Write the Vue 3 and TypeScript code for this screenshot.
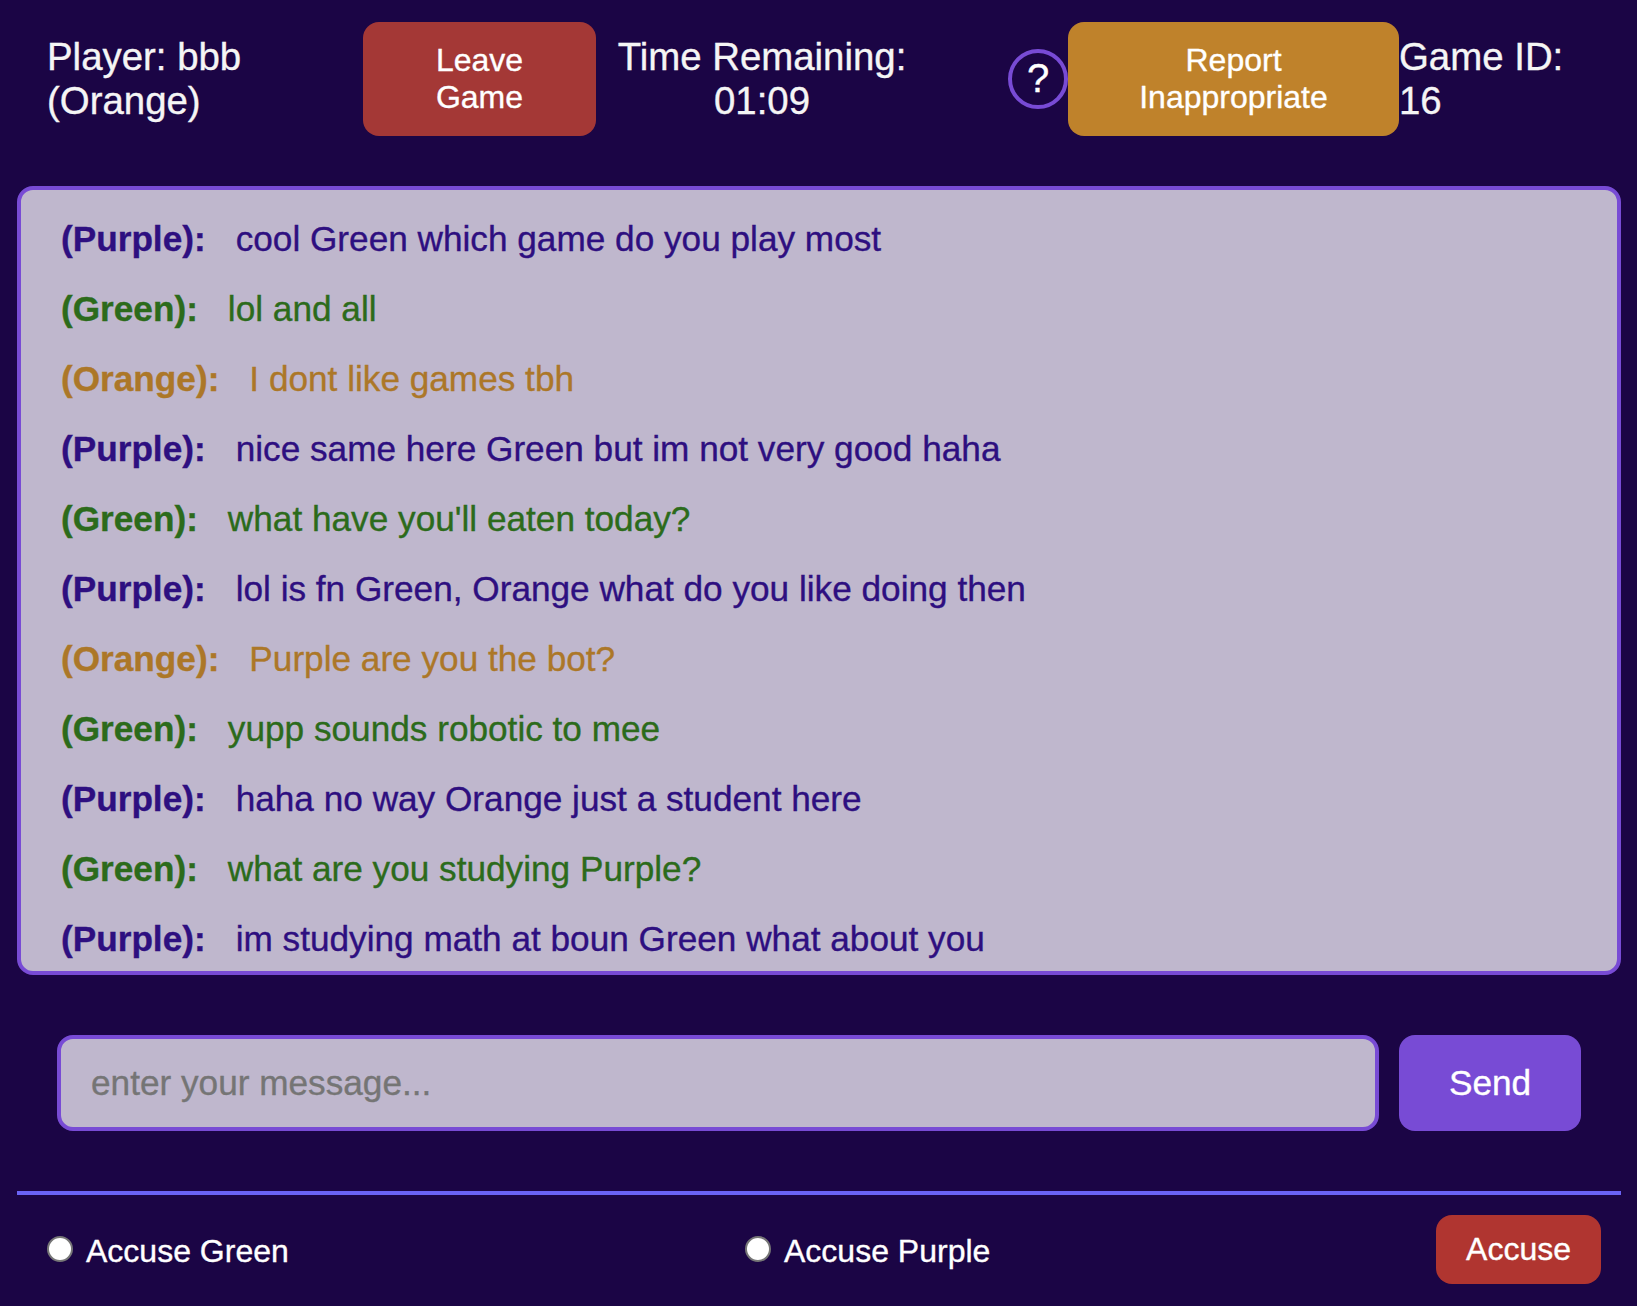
<script setup lang="ts">
import { ref } from 'vue'

type Colour = 'Purple' | 'Green' | 'Orange'

interface Message {
  from: Colour
  text: string
}

const messages: Message[] = [
  { from: 'Purple', text: 'cool Green which game do you play most' },
  { from: 'Green', text: 'lol and all' },
  { from: 'Orange', text: 'I dont like games tbh' },
  { from: 'Purple', text: 'nice same here Green but im not very good haha' },
  { from: 'Green', text: "what have you'll eaten today?" },
  { from: 'Purple', text: 'lol is fn Green, Orange what do you like doing then' },
  { from: 'Orange', text: 'Purple are you the bot?' },
  { from: 'Green', text: 'yupp sounds robotic to mee' },
  { from: 'Purple', text: 'haha no way Orange just a student here' },
  { from: 'Green', text: 'what are you studying Purple?' },
  { from: 'Purple', text: 'im studying math at boun Green what about you' },
]

const suspects: Colour[] = ['Green', 'Purple']
const accused = ref<Colour | null>(null)
const draft = ref('')
</script>

<template>
  <main class="game">
    <header class="top">
      <div class="player">Player: bbb (Orange)</div>
      <button class="btn leave">Leave<br />Game</button>
      <div class="timer">Time Remaining: 01:09</div>
      <button class="help">?</button>
      <button class="btn report">Report<br />Inappropriate</button>
      <div class="game-id">Game ID: 16</div>
    </header>

    <section class="chat">
      <p v-for="(m, i) in messages" :key="i" class="msg" :class="m.from.toLowerCase()">
        <b>({{ m.from }}):</b><span>{{ m.text }}</span>
      </p>
    </section>

    <form class="compose" @submit.prevent>
      <input v-model="draft" class="field" type="text" placeholder="enter your message..." />
      <button class="btn send">Send</button>
    </form>

    <footer class="vote">
      <label v-for="s in suspects" :key="s" class="choice">
        <input v-model="accused" type="radio" name="accused" :value="s" />
        <span>Accuse {{ s }}</span>
      </label>
      <button class="btn accuse">Accuse</button>
    </footer>
  </main>
</template>

<style>
body {
  margin: 0;
  background: #1b0545;
}
</style>

<style scoped>
.game {
  box-sizing: border-box;
  width: 1637px;
  height: 1306px;
  padding: 22px 16px 0 17px;
  overflow: hidden;
  background: #1b0545;
  color: #f5f5f5;
  font-family: "Liberation Sans", Arial, sans-serif;
  -webkit-text-stroke-width: 0.35px;
}
button,
input {
  box-sizing: border-box;
  margin: 0;
  font-family: inherit;
}
.btn {
  padding: 0;
  border: none;
  border-radius: 16px;
  color: #fff;
  font-size: 32px;
  line-height: 37px;
}
.top {
  display: flex;
  align-items: center;
  height: 114px;
  font-size: 38.4px;
  line-height: 44px;
}
.player {
  width: 216px;
  margin-left: 30px;
  margin-right: 100px;
}
.leave {
  width: 233px;
  height: 114px;
  background: #a43836;
}
.timer {
  width: 300px;
  margin-left: 16px;
  text-align: center;
}
.help {
  width: 60px;
  height: 60px;
  margin-left: 96px;
  padding: 0 0 2px;
  border: 4px solid #784bd5;
  border-radius: 50%;
  background: transparent;
  color: #fff;
  font-size: 40px;
  line-height: 50px;
}
.report {
  width: 331px;
  height: 114px;
  background: #bf822b;
}
.game-id {
  width: 180px;
}
.chat {
  box-sizing: border-box;
  height: 789px;
  margin-top: 50px;
  padding: 29px 40px 0;
  overflow: hidden;
  border: 4px solid #784bd5;
  border-radius: 16px;
  background: #bfb7cd;
}
.msg {
  margin: 0 0 30px;
  font-size: 35.2px;
  line-height: 40px;
  white-space: nowrap;
}
.msg span {
  margin-left: 30px;
}
.purple {
  color: #2e0f80;
}
.green {
  color: #2c6b1b;
}
.orange {
  color: #ac7728;
}
.compose {
  display: flex;
  gap: 20px;
  margin: 60px 40px;
}
.field {
  flex: 1;
  min-width: 0;
  height: 96px;
  padding: 0 30px;
  border: 4px solid #784bd5;
  border-radius: 16px;
  outline: none;
  background: #bfb7cd;
  font-size: 35.2px;
}
.field::placeholder {
  color: #757575;
  opacity: 1;
}
.send {
  width: 182px;
  height: 96px;
  background: #784bd5;
  font-size: 35.2px;
  line-height: 40px;
}
.vote {
  display: flex;
  align-items: flex-start;
  padding: 20px 20px 0 30px;
  border-top: 4px solid #6a63f5;
}
.choice {
  display: flex;
  align-items: center;
  width: 698px;
  height: 69px;
  color: #fff;
  font-size: 32px;
  line-height: 37px;
}
.choice input {
  width: 26px;
  height: 26px;
  margin: 0 13px 1px 0;
  appearance: none;
  border: 2px solid #767676;
  border-radius: 50%;
  background: #fff;
}
.choice span {
  padding-top: 3px;
}
.choice + .choice {
  flex: 1;
}
.accuse {
  width: 165px;
  height: 69px;
  background: #b03530;
}
</style>
